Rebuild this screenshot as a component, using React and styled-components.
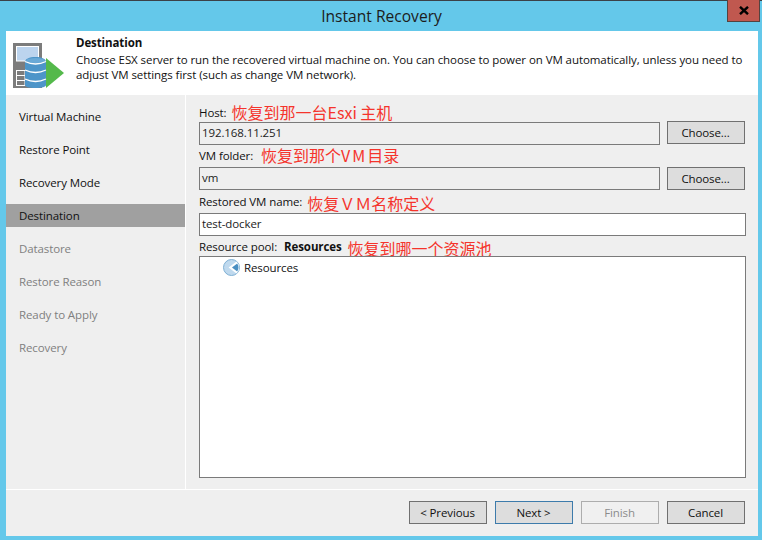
import React from 'react';
import styled, { createGlobalStyle } from 'styled-components';

const Global = createGlobalStyle`
  html, body { margin: 0; padding: 0; background: #64c8ea; }
  * { box-sizing: border-box; }
  #root { width: 762px; height: 540px; overflow: hidden; }
`;

const Window = styled.div`
  width: 762px; height: 540px; background: #64c8ea; border-top: 1px solid #3b4148;
  display: flex; flex-direction: column; padding: 0 4px 4px 6px;
  font-family: "Open Sans", "Noto Sans CJK SC", sans-serif; font-size: 11.5px; letter-spacing: -0.1px; color: #111;
`;
const TitleBar = styled.div`
  height: 30px; flex: none; position: relative; display: flex; align-items: center; justify-content: center;
  font-size: 15.6px; letter-spacing: 0; color: #1c1c1c; padding-right: 1px;
`;
const CloseButton = styled.div`
  position: absolute; top: -1px; right: -2px; width: 33px; height: 22px;
  background: #c0584f; border: 1px solid #54423f; border-top: 0;
  display: flex; align-items: center; justify-content: center;
`;
const Client = styled.div`
  flex: 1; display: flex; flex-direction: column; background: #efefef; min-height: 0;
`;
const Header = styled.div`
  height: 64px; flex: none; background: #fff; display: flex; padding: 4px 8px 0 7px;
`;
const HeaderText = styled.div`
  margin-left: 9px;
`;
const HeaderTitle = styled.div`
  font-weight: 700; line-height: 16px; color: #111;
`;
const HeaderDesc = styled.div`
  line-height: 15px; margin-top: 1px; width: 672px; letter-spacing: -0.07px;
`;
const Body = styled.div`
  flex: 1; display: flex; min-height: 0;
`;
const Sidebar = styled.div`
  width: 180px; flex: none; border-right: 1px solid #fff; padding-top: 10px;
  display: flex; flex-direction: column; gap: 10px;
`;
const Step = styled.div`
  height: 23px; padding-left: 13px; display: flex; align-items: center;
  background: ${p => (p.$active ? '#a0a0a0' : 'transparent')};
  color: ${p => (p.$muted ? '#7f7f7f' : '#111')};
`;
const Main = styled.div`
  flex: 1; padding: 8px 12px 0 13px; display: flex; flex-direction: column;
`;
const LabelRow = styled.div`
  display: flex; align-items: center; height: ${p => p.$h}px; gap: ${p => p.$gap || 0}px;
  padding-bottom: ${p => p.$lift || 0}px;
`;
const Note = styled.span`
  font-family: "Noto Sans CJK SC", sans-serif; font-size: 16px; letter-spacing: 0; color: #f5342c; line-height: 18px;
  margin-top: ${p => p.$drop || 0}px;
  margin-left: ${p => p.$pull ? -p.$pull : 0}px;
`;
const Wide = styled.span`
  letter-spacing: 2px;
`;
const FieldRow = styled.div`
  display: flex; gap: 7px; align-items: flex-start; padding-right: ${p => (p.$inset ? 1 : 0)}px;
`;
const Field = styled.div`
  flex: 1; height: 23px; border: 1px solid #7a7a7a; padding: 0 0 2px 2px; display: flex; align-items: center;
  background: ${p => (p.$editable ? '#fff' : '#efefef')}; color: #222;
`;
const Button = styled.div`
  width: 78px; height: 23px; flex: none; display: flex; align-items: center; justify-content: center;
  background: ${p => (p.$disabled ? '#f0f0f0' : '#dddddd')};
  border: 1px solid ${p => (p.$primary ? '#3d7bab' : p.$disabled ? '#adadad' : '#707070')};
  color: ${p => (p.$disabled ? '#8c8c8c' : '#111')};
  margin-top: ${p => (p.$lift ? '-1px' : '0')};
  padding: 0 1px 1px 0;
`;
const ListBox = styled.div`
  height: 222px; background: #fff; border: 1px solid #7a7a7a; padding: 1px 0 0 23px;
  display: flex; align-items: flex-start;
`;
const TreeItem = styled.div`
  display: flex; align-items: center; gap: 4px; height: 18px;
`;
const Footer = styled.div`
  height: 47px; flex: none; border-top: 1px solid #fff; padding: 11px 13px 0 0;
  display: flex; justify-content: flex-end; gap: 8px;
`;
const Strong = styled.b`
  font-weight: 700; color: #111;
`;

const DestinationIcon = () => (
  <svg width="54" height="46" viewBox="0 0 54 46" style={{ flex: 'none', marginTop: 8 }}>
    <rect x="0" y="0" width="29" height="45" fill="#7c7c7c" />
    <rect x="3.5" y="3.5" width="22" height="14.5" fill="#bcd4ee" stroke="#fff" />
    <path d="M3.5 27.5H12M3.5 32.5H12M3.5 37.5H12M3.5 42.5H12M3.5 27V43M12 27V43" fill="none" stroke="#fff" />
    <path d="M33 15 L51 30 L33 45Z" fill="#54b94b" />
    <path d="M12 19 C12 16 16 14 22.5 14 C29 14 33 16 33 19 V42 C33 44 29 45 22.5 45 C16 45 12 44 12 42Z" fill="#4d95c9" />
    <ellipse cx="22.5" cy="17.5" rx="9.5" ry="2.4" fill="#6aa9d6" />
    <path d="M12 18.5 Q22.5 23.5 33 18.5M12 27 Q22.5 32 33 27M12 36 Q22.5 41 33 36" fill="none" stroke="#fff" strokeWidth="1.3" />
  </svg>
);

const BackIcon = () => (
  <svg width="17" height="17" viewBox="0 0 17 17">
    <circle cx="8.5" cy="8.5" r="8" fill="#bfd9ee" stroke="#7fb0d4" />
    <path d="M13.5 2.6 A8 8 0 0 1 13.5 14.4 L5.6 8.5Z" fill="#fff" />
    <path d="M14.2 4.6 A7 7 0 0 1 14.2 12.4 L9 8.5Z" fill="#4a8fc2" />
  </svg>
);

const steps = [
  ['Virtual Machine'], ['Restore Point'], ['Recovery Mode'], ['Destination', 'active'],
  ['Datastore', 'muted'], ['Restore Reason', 'muted'], ['Ready to Apply', 'muted'], ['Recovery', 'muted'],
];

export default function App() {
  return (
    <Window>
      <Global />
      <TitleBar>
        Instant Recovery
        <CloseButton>
          <svg width="10" height="9" viewBox="0 0 10 9"><path d="M1 0.8 L9 8.2M9 0.8 L1 8.2" stroke="#000" strokeWidth="2.4" /></svg>
        </CloseButton>
      </TitleBar>
      <Client>
        <Header>
          <DestinationIcon />
          <HeaderText>
            <HeaderTitle>Destination</HeaderTitle>
            <HeaderDesc>Choose ESX server to run the recovered virtual machine on. You can choose to power on VM automatically, unless you need to adjust VM settings first (such as change VM network).</HeaderDesc>
          </HeaderText>
        </Header>
        <Body>
          <Sidebar>
            {steps.map(([name, kind]) => (
              <Step key={name} $active={kind === 'active'} $muted={kind === 'muted'}>{name}</Step>
            ))}
          </Sidebar>
          <Main>
            <LabelRow $h={19} $gap={5}>Host: <Note $drop={-2}>恢复到那一台Esxi 主机</Note></LabelRow>
            <FieldRow $inset>
              <Field>192.168.11.251</Field>
              <Button $lift>Choose...</Button>
            </FieldRow>
            <LabelRow $h={22} $gap={8} $lift={2}>VM folder: <Note>恢复到那个<Wide>VM</Wide>目录</Note></LabelRow>
            <FieldRow $inset>
              <Field>vm</Field>
              <Button>Choose...</Button>
            </FieldRow>
            <LabelRow $h={23} $gap={5}>Restored VM name: <Note $drop={2}>恢复ＶＭ名称定义</Note></LabelRow>
            <FieldRow><Field $editable>test-docker</Field></FieldRow>
            <LabelRow $h={20} $gap={7}>Resource pool: <Strong>Resources</Strong> <Note $drop={3} $pull={1}>恢复到哪一个资源池</Note></LabelRow>
            <ListBox>
              <TreeItem>
                <BackIcon />
                Resources
              </TreeItem>
            </ListBox>
          </Main>
        </Body>
        <Footer>
          <Button>&lt; Previous</Button>
          <Button $primary>Next &gt;</Button>
          <Button $disabled>Finish</Button>
          <Button>Cancel</Button>
        </Footer>
      </Client>
    </Window>
  );
}
